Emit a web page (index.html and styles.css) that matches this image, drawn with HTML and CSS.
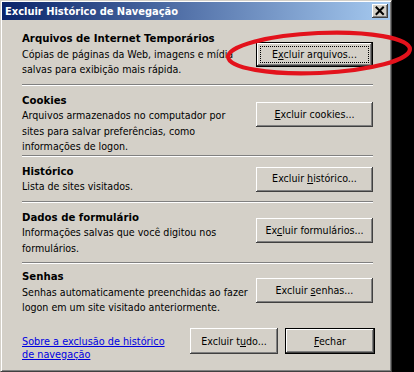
FILE: index.html
```html
<!DOCTYPE html>
<html lang="pt-BR">
<head>
<meta charset="utf-8">
<title>Excluir Histórico de Navegação</title>
<link rel="stylesheet" href="styles.css">
</head>
<body>
<div class="dialog">
  <div class="titlebar">
    <span class="title">Excluir Histórico de Navegação</span>
    <span class="close" aria-label="Fechar">
      <svg width="16" height="14" viewBox="0 0 16 14"><path d="M4.5 3.5 L11 10 M11 3.5 L4.5 10" stroke="#000" stroke-width="2" fill="none" stroke-linecap="square"/></svg>
    </span>
  </div>
  <div class="content">
    <section class="group">
      <div class="text">
        <div class="head">Arquivos de Internet Temporários</div>
        <div class="desc">Cópias de páginas da Web, imagens e mídia<br>salvas para exibição mais rápida.</div>
      </div>
      <button class="btn btn-default btn-focus">E<u>x</u>cluir arquivos...</button>
    </section>
    <hr class="sep">
    <section class="group group-top">
      <div class="text">
        <div class="head">Cookies</div>
        <div class="desc">Arquivos armazenados no computador por<br>sites para salvar preferências, como<br>informações de logon.</div>
      </div>
      <button class="btn btn-raised"><u>E</u>xcluir cookies...</button>
    </section>
    <hr class="sep">
    <section class="group">
      <div class="text">
        <div class="head">Histórico</div>
        <div class="desc">Lista de sites visitados.</div>
      </div>
      <button class="btn">Excluir <u>h</u>istórico...</button>
    </section>
    <hr class="sep">
    <section class="group">
      <div class="text">
        <div class="head">Dados de formulário</div>
        <div class="desc">Informações salvas que você digitou nos<br>formulários.</div>
      </div>
      <button class="btn btn-lift">Ex<u>c</u>luir formulários...</button>
    </section>
    <hr class="sep">
    <section class="group group-last">
      <div class="text">
        <div class="head">Senhas</div>
        <div class="desc">Senhas automaticamente preenchidas ao fazer<br>logon em um site visitado anteriormente.</div>
      </div>
      <button class="btn btn-lift">Excluir <u>s</u>enhas...</button>
    </section>
  </div>
  <div class="footer">
    <a class="link" href="#">Sobre a exclusão de histórico<br>de navegação</a>
    <div class="actions">
      <button class="btn btn-small">Excluir t<u>u</u>do...</button>
      <button class="btn btn-small btn-close btn-default"><u>F</u>echar</button>
    </div>
  </div>
</div>
<svg class="highlight" width="414" height="372" viewBox="0 0 414 372" aria-hidden="true">
  <ellipse cx="319" cy="53" rx="91" ry="20" transform="rotate(-2.5 319 53)" fill="none" stroke="#e3121c" stroke-width="4.2"/>
</svg>
</body>
</html>
```
FILE: styles.css
```css
html, body {
  margin: 0;
  padding: 0;
  background: #000;
}
body {
  width: 414px;
  height: 372px;
  overflow: hidden;
  position: relative;
  font-family: "DejaVu Sans Condensed", "DejaVu Sans", sans-serif;
  font-size: 10.6px;
  color: #000;
}
.dialog {
  box-sizing: border-box;
  width: 392px;
  background: #d4d0c8;
  border: 1px solid;
  border-color: #d4d0c8 #404040 #404040 #d4d0c8;
  box-shadow: inset 1px 1px #ffffff, inset -1px -1px #808080;
  padding: 1px 1px 10px;
}
.titlebar {
  height: 18px;
  display: flex;
  align-items: center;
  justify-content: space-between;
  background: linear-gradient(to right, #0a246a, #a6caf0);
  padding-left: 3px;
}
.title {
  color: #fff;
  font-weight: bold;
  font-size: 11px;
  white-space: nowrap;
}
.close {
  width: 16px;
  height: 14px;
  margin-right: 2px;
  background: #d4d0c8;
  box-shadow: inset -1px -1px #404040, inset 1px 1px #fff, inset -2px -2px #808080;
  display: flex;
}
.content {
  padding: 4px 17px 0 20px;
}
.group {
  display: flex;
  align-items: center;
  padding: 7px 0 6px;
  line-height: 15.5px;
}
.group-top {
  align-items: flex-start;
  padding-bottom: 0;
}
.group-last {
  padding-top: 5px;
}
.text {
  flex: 1;
  white-space: nowrap;
}
.head {
  font-weight: bold;
  font-size: 11.3px;
}
.sep {
  border: 0;
  height: 0;
  margin: 0;
  border-top: 1px solid #808080;
  border-bottom: 1px solid #ffffff;
}
.btn {
  box-sizing: border-box;
  width: 117px;
  height: 25px;
  padding: 0;
  font: inherit;
  font-size: 10.6px;
  color: #000;
  background: #d4d0c8;
  border: 0;
  box-shadow: inset -1px -1px #404040, inset 1px 1px #fff, inset -2px -2px #808080, inset 2px 2px #d4d0c8;
  position: relative;
  flex: none;
}
.btn-raised {
  margin-top: 9.5px;
}
.btn-lift {
  margin-bottom: 4px;
}
.btn-default {
  border: 1px solid #000;
}
.btn-focus::after {
  content: "";
  position: absolute;
  inset: 3px;
  border: 1px dotted #000;
}
.footer {
  display: flex;
  justify-content: space-between;
  align-items: flex-start;
  padding: 6px 15px 0 20px;
}
.link {
  color: #0000e0;
  font-size: 10.8px;
  line-height: 13px;
  margin-top: 7px;
  text-decoration: underline;
}
.actions {
  display: flex;
  gap: 7px;
}
.btn-small {
  width: 88px;
  height: 26px;
}
.btn-close {
  width: 90px;
}
.highlight {
  position: absolute;
  left: 0;
  top: 0;
  pointer-events: none;
}
```
